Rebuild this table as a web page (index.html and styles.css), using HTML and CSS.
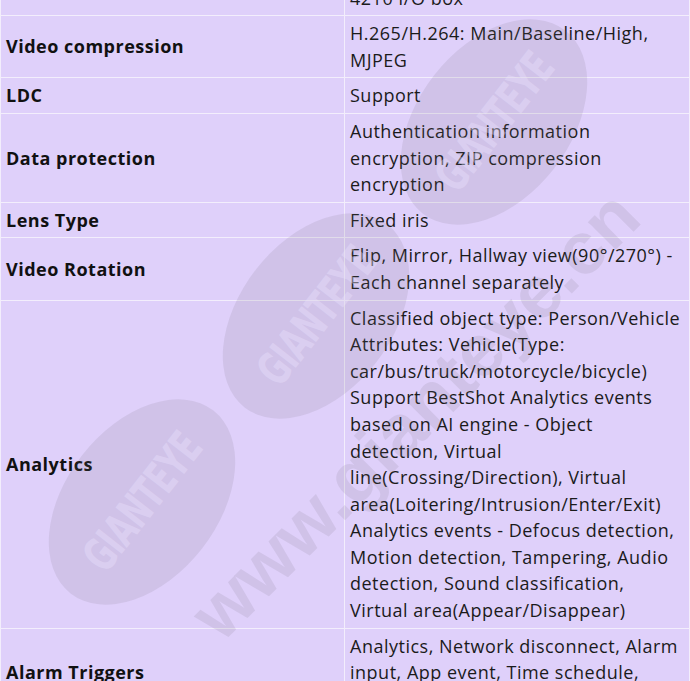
FILE: index.html
```html
<!DOCTYPE html>
<html lang="en">
<head>
<meta charset="utf-8">
<title>Specifications</title>
<link rel="stylesheet" href="styles.css">
</head>
<body>
<div class="page">
  <table class="spec">
    <tr><th>Alarm I/O</th><td>Alarm input 1ea, Alarm output 1ea,<br>4210 I/O box</td></tr>
    <tr><th>Video compression</th><td>H.265/H.264: Main/Baseline/High, MJPEG</td></tr>
    <tr><th>LDC</th><td>Support</td></tr>
    <tr><th>Data protection</th><td>Authentication information encryption, ZIP compression encryption</td></tr>
    <tr><th>Lens Type</th><td>Fixed iris</td></tr>
    <tr><th>Video Rotation</th><td>Flip, Mirror, Hallway view(90°/270°) - Each channel separately</td></tr>
    <tr><th>Analytics</th><td>Classified object type: Person/Vehicle<br>Attributes: Vehicle(Type: car/bus/truck/motorcycle/bicycle)<br>Support BestShot Analytics events based on AI engine - Object detection, Virtual line(Crossing/Direction), Virtual area(Loitering/Intrusion/Enter/Exit)<br>Analytics events - Defocus detection, Motion detection, Tampering, Audio detection, Sound classification, Virtual area(Appear/Disappear)</td></tr>
    <tr><th>Alarm Triggers</th><td>Analytics, Network disconnect, Alarm input, App event, Time schedule, Audio detection</td></tr>
  </table>
  <div class="wm" aria-hidden="true">
    <div class="oval oval-1"><span>GIANTEYE</span></div>
    <div class="oval oval-2"><span>GIANTEYE</span></div>
    <div class="oval oval-3"><span>GIANTEYE</span></div>
    <div class="url">www.gianteye.cn</div>
  </div>
</div>
</body>
</html>
```
FILE: styles.css
```css
html, body {
  margin: 0;
  padding: 0;
  overflow: hidden;
  background: #dfd0fa;
}
.page {
  position: relative;
  width: 690px;
  height: 681px;
  overflow: hidden;
}
.spec {
  width: 690px;
  margin-top: -47px;
  border-collapse: collapse;
  background: #dfd0fa;
  font-family: "Open Sans", "Noto Sans", sans-serif;
  font-size: 18px;
  letter-spacing: 0.5px;
  line-height: 26.6px;
  color: #1b1b1b;
}
.spec th,
.spec td {
  border: 1px solid #f3eefc;
  padding: 4px 5px;
  vertical-align: middle;
  text-align: left;
}
.spec th {
  width: 333px;
  font-weight: 700;
  color: #111;
}
.wm {
  position: absolute;
  inset: 0;
  pointer-events: none;
}
.oval {
  position: absolute;
  width: 232px;
  height: 152px;
  margin: -76px 0 0 -116px;
  border-radius: 50%;
  background: rgba(120, 115, 130, 0.14);
  transform: rotate(-52deg);
  display: flex;
  align-items: center;
  justify-content: center;
}
.oval span {
  font-family: "DejaVu Sans Condensed", "DejaVu Sans", sans-serif;
  font-weight: 700;
  font-size: 46px;
  letter-spacing: -1px;
  color: rgba(236, 226, 255, 0.4);
  transform: scaleX(0.72);
  white-space: nowrap;
}
.oval-1 { left: 494px; top: 122px; }
.oval-2 { left: 316px; top: 316px; }
.oval-3 { left: 142px; top: 502px; }
.url {
  position: absolute;
  left: 415px;
  top: 415px;
  transform: translate(-50%, -50%) rotate(-45deg);
  font-family: "Liberation Sans", Arial, sans-serif;
  font-weight: 700;
  font-size: 74px;
  line-height: 1;
  white-space: nowrap;
  color: rgba(120, 115, 130, 0.14);
}
```
